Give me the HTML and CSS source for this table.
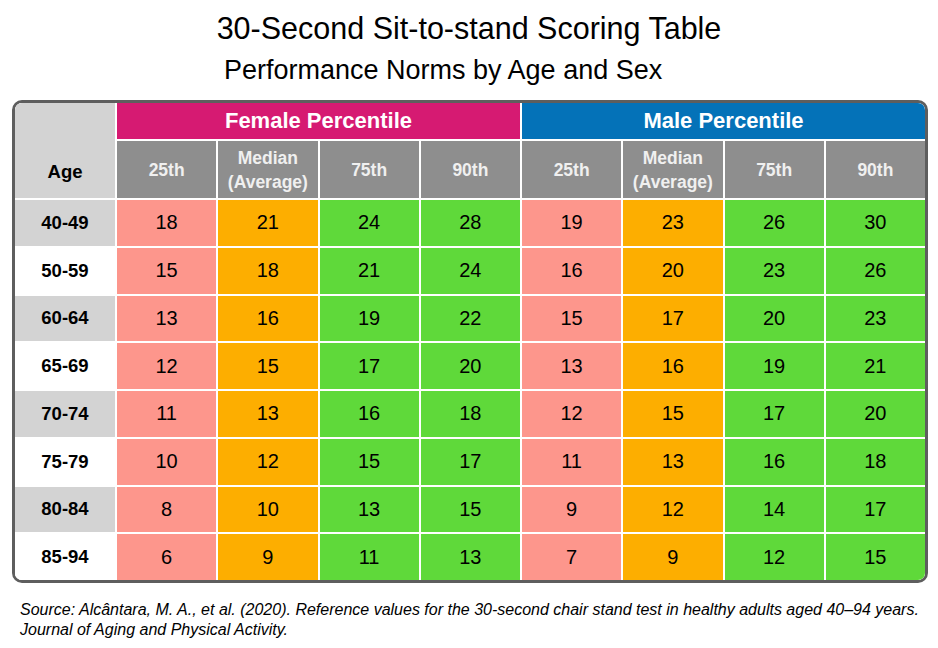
FILE: index.html
```html
<!DOCTYPE html>
<html>
<head>
<meta charset="utf-8">
<link rel="stylesheet" href="styles.css">
</head>
<body>
<div class="page">
  <h1 class="title">30-Second Sit-to-stand Scoring Table</h1>
  <h2 class="subtitle">Performance Norms by Age and Sex</h2>
  <div class="table-wrap">
    <div class="grid">
      <div class="age-head">Age</div>
      <div class="group female">Female Percentile</div>
      <div class="group male">Male Percentile</div>
      <div class="sub">25th</div>
      <div class="sub">Median<br>(Average)</div>
      <div class="sub">75th</div>
      <div class="sub">90th</div>
      <div class="sub">25th</div>
      <div class="sub">Median<br>(Average)</div>
      <div class="sub">75th</div>
      <div class="sub">90th</div>

      <div class="age alt">40-49</div><div class="c p25">18</div><div class="c med">21</div><div class="c hi">24</div><div class="c hi">28</div><div class="c p25">19</div><div class="c med">23</div><div class="c hi">26</div><div class="c hi">30</div>
      <div class="age">50-59</div><div class="c p25">15</div><div class="c med">18</div><div class="c hi">21</div><div class="c hi">24</div><div class="c p25">16</div><div class="c med">20</div><div class="c hi">23</div><div class="c hi">26</div>
      <div class="age alt">60-64</div><div class="c p25">13</div><div class="c med">16</div><div class="c hi">19</div><div class="c hi">22</div><div class="c p25">15</div><div class="c med">17</div><div class="c hi">20</div><div class="c hi">23</div>
      <div class="age">65-69</div><div class="c p25">12</div><div class="c med">15</div><div class="c hi">17</div><div class="c hi">20</div><div class="c p25">13</div><div class="c med">16</div><div class="c hi">19</div><div class="c hi">21</div>
      <div class="age alt">70-74</div><div class="c p25">11</div><div class="c med">13</div><div class="c hi">16</div><div class="c hi">18</div><div class="c p25">12</div><div class="c med">15</div><div class="c hi">17</div><div class="c hi">20</div>
      <div class="age">75-79</div><div class="c p25">10</div><div class="c med">12</div><div class="c hi">15</div><div class="c hi">17</div><div class="c p25">11</div><div class="c med">13</div><div class="c hi">16</div><div class="c hi">18</div>
      <div class="age alt">80-84</div><div class="c p25">8</div><div class="c med">10</div><div class="c hi">13</div><div class="c hi">15</div><div class="c p25">9</div><div class="c med">12</div><div class="c hi">14</div><div class="c hi">17</div>
      <div class="age">85-94</div><div class="c p25">6</div><div class="c med">9</div><div class="c hi">11</div><div class="c hi">13</div><div class="c p25">7</div><div class="c med">9</div><div class="c hi">12</div><div class="c hi">15</div>
    </div>
  </div>
  <p class="source">Source: Alcântara, M. A., et al. (2020). Reference values for the 30-second chair stand test in healthy adults aged 40–94 years.<br>Journal of Aging and Physical Activity.</p>
</div>
</body>
</html>
```
FILE: styles.css
```css
html, body {
  margin: 0;
  padding: 0;
  background: #ffffff;
}
body {
  font-family: "Liberation Sans", Arial, sans-serif;
  color: #000;
}
.page {
  width: 938px;
  height: 648px;
  padding-top: 10px;
  box-sizing: border-box;
}
.title {
  margin: 0;
  font-size: 30.5px;
  font-weight: normal;
  text-align: center;
  line-height: 36px;
}
.subtitle {
  margin: 0;
  margin-top: 8px;
  font-size: 27px;
  font-weight: normal;
  line-height: 32px;
  padding-left: 224px;
}
.table-wrap {
  margin: 14px 0 0 12px;
  width: 916px;
  border: 3px solid #5e5e5e;
  border-radius: 10px;
  overflow: hidden;
  box-sizing: border-box;
  background: #ffffff;
}
.grid {
  display: grid;
  grid-template-columns: 100px repeat(8, 1fr);
  grid-template-rows: 36px 57px repeat(8, 45.75px);
  gap: 2px;
  background: #ffffff;
}
.grid > div {
  display: flex;
  align-items: center;
  justify-content: center;
  text-align: center;
}
.age-head {
  grid-row: 1 / span 2;
  grid-column: 1;
  background: #d3d3d3;
  font-weight: bold;
  font-size: 18.5px;
  padding-top: 42px;
}
.group {
  color: #ffffff;
  font-weight: bold;
  font-size: 22px;
}
.female {
  grid-column: 2 / span 4;
  background: #d61a72;
}
.male {
  grid-column: 6 / span 4;
  background: #0472b8;
}
.sub {
  background: #8e8e8e;
  color: #f0f0f0;
  font-weight: bold;
  font-size: 17.5px;
  line-height: 24px;
}
.age {
  background: #ffffff;
  font-weight: bold;
  font-size: 18.5px;
}
.age.alt {
  background: #d3d3d3;
}
.c {
  font-size: 20px;
}
.p25 { background: #fd968c; }
.med { background: #fdae00; }
.hi { background: #5fd93a; }
.source {
  margin: 17px 0 0 20px;
  font-style: italic;
  font-size: 16px;
  line-height: 20px;
}
```
